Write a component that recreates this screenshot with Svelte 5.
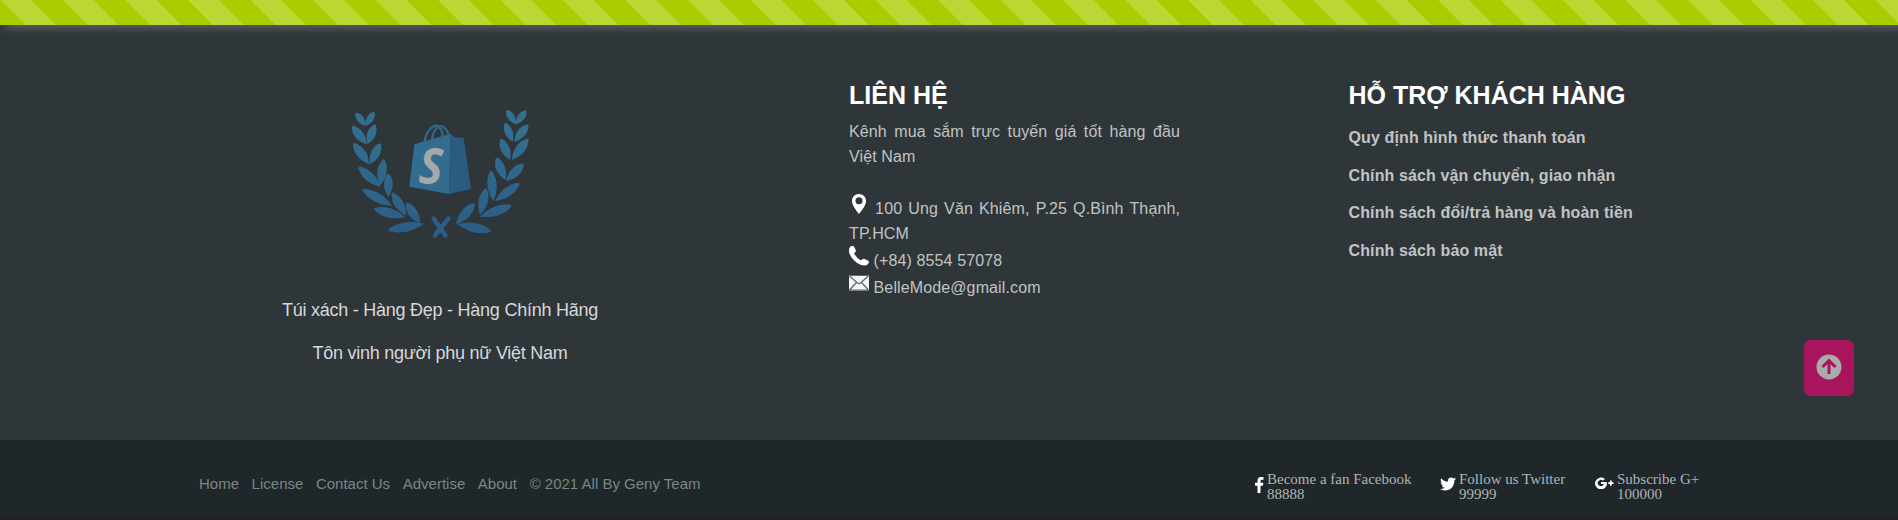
<script>
  const leaves = [
    [107,92,78,55],[107,92,132,52],[110,148,68,95],[112,148,135,90],
    [118,208,72,147],[120,208,150,147],[152,275,88,218],[150,272,161,195],
    [186,332,100,285],[175,305,175,238],[228,362,188,295],[225,367,135,342],
    [270,385,230,325],[282,386,178,405],
    [558,88,531,46],[558,88,587,48],[548,140,526,86],[553,140,593,90],
    [540,195,513,133],[545,195,593,133],[526,255,500,190],[528,258,579,208],
    [490,318,483,230],[495,318,566,267],[450,360,468,282],[450,365,542,333],
    [378,388,432,327],[383,388,480,408]
  ];

  // A slender leaf that tapers to a point at both ends.
  function leaf([x1, y1, x2, y2]) {
    const dx = x2 - x1, dy = y2 - y1;
    const len = Math.hypot(dx, dy);
    const w = Math.min(18, 5 + len * 0.18);
    const nx = (-dy / len) * w, ny = (dx / len) * w;
    const p = (t, s) => `${(x1 + dx * t + nx * s).toFixed(1)} ${(y1 + dy * t + ny * s).toFixed(1)}`;
    return `M${p(0, 0)}C${p(0.35, 0.95)} ${p(0.72, 1.05)} ${p(1.02, 0.14)}L${p(1.02, -0.14)}C${p(0.72, -1.05)} ${p(0.35, -0.95)} ${p(0, 0)}Z`;
  }

  const policies = [
    'Quy định hình thức thanh toán',
    'Chính sách vận chuyển, giao nhận',
    'Chính sách đổi/trả hàng và hoàn tiền',
    'Chính sách bảo mật'
  ];
  const links = ['Home', 'License', 'Contact Us', 'Advertise', 'About', '© 2021 All By Geny Team'];
</script>

<div class="page">
  <div class="stripes"></div>
  <main>
    <section class="brand">
      <svg class="logo" viewBox="0 0 660 465" width="220" height="155">
        <defs>
          <linearGradient id="wreath" x1="0" y1="45" x2="0" y2="410" gradientUnits="userSpaceOnUse">
            <stop offset="0" stop-color="#347291" />
            <stop offset="1" stop-color="#2b5d87" />
          </linearGradient>
        </defs>
        <g fill="url(#wreath)">
          {#each leaves as l}<path d={leaf(l)} />{/each}
        </g>
        <path d="M311 371L346 421M355 371L315 421" fill="none" stroke="#2b5d87" stroke-width="14" stroke-linecap="round" />
        <g fill="none" stroke="#2f678d" stroke-width="7">
          <path d="M284 141C287 108 311 85 325 95Q339 104 338 130M306 134C308 108 323 91 336 94Q351 101 355 119" />
        </g>
        <path d="M253 148L362 116L357 297L238 275Z" fill="#326d90" />
        <path d="M362 116L374 127L401 128L423 282L357 297Z" fill="#2a5b80" />
        <text class="bag-letter" transform="translate(265 265) rotate(2) scale(.92 1)">S</text>
      </svg>
      <p>Túi xách - Hàng Đẹp - Hàng Chính Hãng</p>
      <p class="second">Tôn vinh người phụ nữ Việt Nam</p>
    </section>

    <section class="contact">
      <h2>LIÊN HỆ</h2>
      <div class="line full">Kênh mua sắm trực tuyến giá tốt hàng đầu</div>
      <div class="line">Việt Nam</div>
      <div class="line address full">
        <svg width="20" height="20" viewBox="0 0 20 20"><path fill="#fff" fill-rule="evenodd" d="M10 0C5.8 0 3 3 3 7c0 4.5 4 9 7 13 3-4 7-8.500 7-13 0-4-2.800-7-7-7Zm0 3.300a3.500 3.500 0 1 1 0 7 3.500 3.500 0 0 1 0-7Z" /></svg>
        100 Ung Văn Khiêm, P.25 Q.Bình Thạnh,
      </div>
      <div class="line">TP.HCM</div>
      <div class="line tall"><svg width="20" height="20" viewBox="0 0 20 20"><path fill="#fff" d="M1 1Q3-.5 4.800.2L7 4.600Q7 6 5 7.400Q7.500 12 12 14.600Q13.500 12.500 15 12.700L19.600 15Q20.500 16.700 18.500 18.500Q16 20.500 11.500 18.800Q2.500 14.500.1 6.500Q-.4 3 1 1Z" /></svg> (+84) 8554 57078</div>
      <div class="line tall"><svg width="20" height="20" viewBox="0 0 20 20"><rect y="2" width="20" height="15.500" rx="1" fill="#f5f5f5" /><path d="M.5 3L8.500 10Q10 11.300 11.500 10L19.500 3M.5 17L7.500 9.500M19.500 17L12.500 9.500M.5 2.500H19.500M.5 17H19.500" fill="none" stroke="#5f6466" stroke-width="1.200" /></svg> BelleMode@gmail.com</div>
    </section>

    <section class="support">
      <h2>HỖ TRỢ KHÁCH HÀNG</h2>
      {#each policies as policy}<div class="policy">{policy}</div>{/each}
    </section>
  </main>

  <footer>
    <nav>
      {#each links as link}<span>{link}</span>{/each}
    </nav>
    <div class="social">
      <div class="fb">
        <svg width="9" height="16" viewBox="0 0 9 16"><path fill="#fff" d="M8.500.1V2.800H7Q5.500 2.800 5.500 4.100V5.800H8.300L7.900 8.700H5.500V16H2.500V8.700H0V5.800H2.500V3.700Q2.500 0 6.300 0Z" /></svg>
        <span>Become a fan Facebook<br />88888</span>
      </div>
      <div class="tw">
        <svg width="16" height="14" viewBox="0 0 16 14"><path fill="#fff" d="M16 1.700Q15.300 2.700 14.400 3.300C14.600 9 10.500 13.500 5.100 13.500Q2.100 13.500 0 12.100Q2.700 12.300 4.800 10.700Q2.500 10.500 1.800 8.400H3.200Q.7 7.600.6 5.200L2.100 5.600Q-.2 3.700 1.100 1.200Q3.900 4.600 7.900 4.700C7.200 1.500 10.900-1.100 13.500 1.500L15.600.5Q15.200 1.800 14.200 2.300Z" /></svg>
        <span>Follow us Twitter<br />99999</span>
      </div>
      <div class="gp">
        <svg width="19" height="12" viewBox="0 0 19 12"><path fill="#fff" d="M6 4.900V7.100H9Q8.300 9.200 6 9.200A3.200 3.200 0 1 1 8.100 3.700L9.900 2A5.900 5.900 0 1 0 11.700 4.900ZM15 3.500H16.700V5.200H18.500V6.900H16.700V8.700H15V6.900H13.200V5.200H15Z" /></svg>
        <span>Subscribe G+<br />100000</span>
      </div>
    </div>
  </footer>

  <button class="top" aria-label="Top">
    <svg width="26" height="26" viewBox="0 0 26 26"><circle cx="13" cy="13" r="12.500" fill="#ababab" /><path d="M13 20V7.500M6.500 13L13 6.500L19.500 13" fill="none" stroke="#a8155c" stroke-width="3" /></svg>
  </button>
</div>

<style>
  .page {
    position: relative;
    display: flex;
    flex-direction: column;
    width: 1898px;
    height: 520px;
    overflow: hidden;
    background: #2f3639;
    color: #c1c3c4;
    font-family: "Liberation Sans", Arial, sans-serif;
    font-size: 16px;
  }
  .stripes {
    flex: none;
    height: 25px;
    background: linear-gradient(45deg, #bbd733 25%, #aacd00 25%, #aacd00 50%, #bbd733 50%, #bbd733 75%, #aacd00 75%) 0 0 / 62.5px 62.5px;
    box-shadow: 5px 2px 11px #65696c;
  }
  main {
    display: grid;
    grid-template-columns: 649px 499.5px 1fr;
    padding-left: 200px;
    height: 415px;
  }
  h2 {
    margin: 54px 0 0;
    height: 40px;
    line-height: 32px;
    font-size: 25px;
    color: #fff;
    white-space: nowrap;
  }
  .brand {
    width: 480px;
    padding-top: 70px;
    text-align: center;
  }
  .logo { display: block; margin-left: 130px; }
  .bag-letter {
    font: italic 700 148px "Open Sans", sans-serif;
    fill: #a4a8ab;
  }
  .brand p {
    margin: 48px 0 0;
    line-height: 24px;
    font-size: 18px;
    letter-spacing: -0.25px;
    color: #d7d8d9;
    white-space: nowrap;
  }
  .brand p.second { margin-top: 19px; }
  .contact { width: 331px; }
  .line { height: 25px; line-height: 25px; letter-spacing: 0.12px; white-space: nowrap; }
  .full { text-align-last: justify; }
  .address { margin-top: 25px; height: 27px; }
  .tall { height: 27px; line-height: 29px; }
  .line svg { vertical-align: 0; }
  .policy {
    height: 37.5px;
    line-height: 38px;
    font-weight: bold;
    letter-spacing: 0.12px;
    white-space: nowrap;
  }
  footer {
    display: flex;
    justify-content: space-between;
    height: 80px;
    box-sizing: border-box;
    padding: 0 198px 0 199px;
    background: #1f272a;
    border-bottom: 2px solid #221f26;
  }
  nav {
    display: flex;
    gap: 12.6px;
    padding-top: 34px;
    line-height: 20px;
    font-size: 15px;
    color: #7b8687;
    white-space: nowrap;
  }
  .social {
    display: flex;
    padding-top: 32px;
    font: 15px/15px "Liberation Serif", "Times New Roman", serif;
    color: #b0b3b4;
    white-space: nowrap;
  }
  .social > div { display: flex; gap: 3px; }
  .social svg { flex: none; margin-top: 5px; }
  .fb { width: 185px; }
  .tw { width: 155px; }
  .gp { width: 105px; }
  .top {
    position: absolute;
    left: 1804px;
    top: 340px;
    display: grid;
    place-items: center;
    width: 50px;
    height: 56px;
    padding: 0 0 3px;
    border: 0;
    border-radius: 7px;
    background: #a8155c;
  }
</style>
